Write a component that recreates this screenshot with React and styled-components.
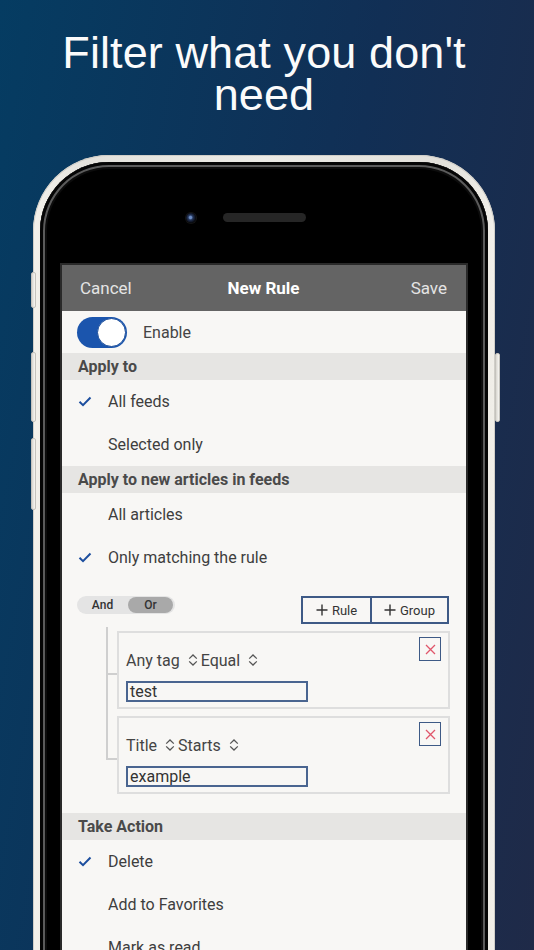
import React from "react";
import styled, { createGlobalStyle } from "styled-components";

const Global = createGlobalStyle`
  html, body { margin: 0; padding: 0; }
  body { width: 534px; height: 950px; overflow: hidden; }
  * { box-sizing: border-box; }
`;

const Page = styled.div`
  width: 534px;
  height: 950px;
  overflow: hidden;
  background: linear-gradient(100deg, #053c62 0%, #112f55 55%, #1f2a48 100%);
  padding-left: 33px;
`;

const Column = styled.div`
  width: 462px;
`;

const Title = styled.h1`
  margin: 0;
  padding-top: 32px;
  font-family: "Liberation Sans", Arial, sans-serif;
  font-weight: 400;
  font-size: 45px;
  line-height: 42px;
  color: #fbfbfb;
  text-align: center;
  letter-spacing: 0.1px;
`;

const Shell = styled.div`
  position: relative;
  margin-top: 39px;
  height: 900px;
  border-radius: 76px 76px 0 0;
  padding: 7px 7px 0;
  background: linear-gradient(90deg, #f3f1eb 0%, #e4e2dc 12%, #ecebe6 50%, #e2e0da 88%, #f1efe9 100%);
  box-shadow: inset 0 0 0 1px #d0cec8;
`;

const SideButton = styled.div`
  position: absolute;
  top: ${(p) => p.$top}px;
  ${(p) => (p.$right ? "right: -5px;" : "left: -2px;")}
  width: 5px;
  height: ${(p) => p.$h}px;
  border-radius: 2px;
  background: linear-gradient(90deg, #d8d6d0, #f7f6f2);
  border: 1px solid #c5c3bd;
`;

const Body = styled.div`
  height: 100%;
  border-radius: 69px 69px 0 0;
  background: #000;
  box-shadow: inset 0 0 0 3px #050505, inset 0 0 0 5px #5b5b5b, inset 0 0 0 7px #0c0c0c;
  padding: 0 22px;
`;

const TopArea = styled.div`
  height: 103px;
  padding-top: 51px;
  display: grid;
  grid-template-columns: 1fr auto 1fr;
  align-items: start;
`;

const Camera = styled.div`
  justify-self: end;
  margin-right: 27px;
  width: 10px;
  height: 10px;
  border-radius: 50%;
  background: radial-gradient(circle at 45% 45%, #6d8cc4 0 1.2px, #24365a 2.4px, #18223a 3.6px, #0b0e16 5px);
  box-shadow: 0 0 0 1px #141414;
`;

const Speaker = styled.div`
  width: 83px;
  height: 9px;
  border-radius: 5px;
  background: #262626;
`;

const Screen = styled.div`
  width: 404px;
  height: 700px;
  background: #f8f7f5;
  box-shadow: 0 0 0 2px #2a2a2a;
  font-family: Roboto, "Noto Sans", sans-serif;
  overflow: hidden;
`;

const NavBar = styled.div`
  height: 46px;
  background: #646464;
  display: grid;
  grid-template-columns: 1fr auto 1fr;
  align-items: center;
  padding: 0 19px 0 18px;
  font-size: 17px;
  color: #e4e4e4;
`;

const NavTitle = styled.div`
  font-weight: 700;
  color: #fff;
`;

const NavRight = styled.div`
  justify-self: end;
`;

const ToggleRow = styled.div`
  height: 42px;
  display: flex;
  align-items: center;
  gap: 16px;
  padding-left: 15px;
  font-size: 16px;
  color: #444;
`;

const Track = styled.div`
  width: 50px;
  height: 31px;
  border-radius: 16px;
  background: #1b55ad;
  display: flex;
  align-items: center;
  justify-content: flex-end;
  padding-right: 1px;
`;

const Knob = styled.div`
  width: 29px;
  height: 29px;
  border-radius: 50%;
  background: #fff;
  border: 1px solid #1a4d9a;
`;

const SectionHeader = styled.div`
  height: 27px;
  display: flex;
  align-items: center;
  padding-left: 16px;
  background: #e6e5e3;
  font-size: 16px;
  font-weight: 700;
  color: #4a4a4a;
  margin-top: ${(p) => p.$mt || 0}px;
`;

const Row = styled.div`
  height: 43px;
  display: grid;
  grid-template-columns: 30px 1fr;
  align-items: center;
  padding-left: 16px;
  font-size: 16px;
  color: #3e3e3e;
`;

const Check = () => (
  <svg width="14" height="11" viewBox="0 0 14 11">
    <path d="M1.5 5.8 L5 9.2 L12.5 1.5" fill="none" stroke="#1c4e9e" strokeWidth="2" />
  </svg>
);

const ControlRow = styled.div`
  display: flex;
  justify-content: space-between;
  align-items: flex-start;
  padding: 17px 17px 0 15px;
`;

const Segmented = styled.div`
  width: 98px;
  height: 18px;
  border-radius: 9px;
  background: #e4e4e4;
  display: grid;
  grid-template-columns: 51px 1fr;
  padding: 1px 2px 1px 0;
  font-size: 12px;
  font-weight: 500;
  color: #333;
`;

const Segment = styled.div`
  border-radius: 8px;
  display: flex;
  align-items: center;
  justify-content: center;
  background: ${(p) => (p.$active ? "#a9a9a9" : "transparent")};
`;

const ButtonGroup = styled.div`
  display: flex;
  border: 2px solid #3e5a86;
`;

const AddButton = styled.div`
  width: ${(p) => p.$w}px;
  height: 24px;
  display: flex;
  align-items: center;
  justify-content: center;
  gap: 4px;
  font-size: 13px;
  color: #333;
  & + & {
    border-left: 2px solid #3e5a86;
  }
`;

const Plus = () => (
  <svg width="12" height="12" viewBox="0 0 12 12">
    <path d="M6 0.5 V11.5 M0.5 6 H11.5" stroke="#333" strokeWidth="1.4" />
  </svg>
);

const RuleTree = styled.div`
  position: relative;
  margin: 7px 16px 0 55px;
  display: flex;
  flex-direction: column;
  gap: 7px;
  &::before {
    content: "";
    position: absolute;
    left: -11px;
    top: -4px;
    bottom: 36px;
    width: 2px;
    background: #cfcfcf;
  }
`;

const RuleCard = styled.div`
  position: relative;
  height: 78px;
  border: 2px solid #dedede;
  display: flex;
  padding: 0 7px 0 7px;
  &::before {
    content: "";
    position: absolute;
    left: -13px;
    top: 40px;
    width: 11px;
    height: 2px;
    background: #cfcfcf;
  }
`;

const RuleMain = styled.div`
  flex: 1;
  padding-top: 17px;
`;

const Selects = styled.div`
  display: flex;
  align-items: center;
  gap: 3px;
  height: 20px;
  font-size: 16px;
  color: #444;
`;

const Select = styled.div`
  display: flex;
  align-items: center;
  gap: 8px;
`;

const Chevrons = () => (
  <svg width="10" height="12" viewBox="0 0 10 12">
    <path d="M1.2 4.6 L5 1 L8.8 4.6 M1.2 7.4 L5 11 L8.8 7.4" fill="none" stroke="#555" strokeWidth="1.3" />
  </svg>
);

const Field = styled.div`
  margin-top: 11px;
  width: 182px;
  height: 21px;
  border: 2px solid #4a6590;
  padding: 0 2px;
  font-size: 16px;
  line-height: 17px;
  color: #333;
`;

const CloseButton = styled.div`
  margin-top: 4px;
  width: 22px;
  height: 24px;
  border: 1.5px solid #3e5a86;
  display: flex;
  align-items: center;
  justify-content: center;
`;

const CloseIcon = () => (
  <svg width="11" height="11" viewBox="0 0 11 11">
    <path d="M1 1 L10 10 M10 1 L1 10" stroke="#e0566b" strokeWidth="1.3" />
  </svg>
);

const Rule = ({ field, op, value }) => (
  <RuleCard>
    <RuleMain>
      <Selects>
        <Select>
          {field}
          <Chevrons />
        </Select>
        <Select>
          {op}
          <Chevrons />
        </Select>
      </Selects>
      <Field>{value}</Field>
    </RuleMain>
    <CloseButton>
      <CloseIcon />
    </CloseButton>
  </RuleCard>
);

const Option = ({ checked, children }) => (
  <Row>
    <span>{checked ? <Check /> : null}</span>
    <span>{children}</span>
  </Row>
);

export default function App() {
  return (
    <Page>
      <Global />
      <Column>
        <Title>
          Filter what you don't
          <br />
          need
        </Title>
        <Shell>
          <SideButton $top={117} $h={36} />
          <SideButton $top={197} $h={70} />
          <SideButton $top={283} $h={72} />
          <SideButton $right $top={198} $h={69} />
          <Body>
            <TopArea>
              <Camera />
              <Speaker />
            </TopArea>
            <Screen>
              <NavBar>
                <div>Cancel</div>
                <NavTitle>New Rule</NavTitle>
                <NavRight>Save</NavRight>
              </NavBar>
              <ToggleRow>
                <Track>
                  <Knob />
                </Track>
                Enable
              </ToggleRow>
              <SectionHeader>Apply to</SectionHeader>
              <Option checked>All feeds</Option>
              <Option>Selected only</Option>
              <SectionHeader>Apply to new articles in feeds</SectionHeader>
              <Option>All articles</Option>
              <Option checked>Only matching the rule</Option>
              <ControlRow>
                <Segmented>
                  <Segment>And</Segment>
                  <Segment $active>Or</Segment>
                </Segmented>
                <ButtonGroup>
                  <AddButton $w={67}>
                    <Plus />
                    Rule
                  </AddButton>
                  <AddButton $w={77}>
                    <Plus />
                    Group
                  </AddButton>
                </ButtonGroup>
              </ControlRow>
              <RuleTree>
                <Rule field="Any tag" op="Equal" value="test" />
                <Rule field="Title" op="Starts" value="example" />
              </RuleTree>
              <SectionHeader $mt={19}>Take Action</SectionHeader>
              <Option checked>Delete</Option>
              <Option>Add to Favorites</Option>
              <Option>Mark as read</Option>
            </Screen>
          </Body>
        </Shell>
      </Column>
    </Page>
  );
}
